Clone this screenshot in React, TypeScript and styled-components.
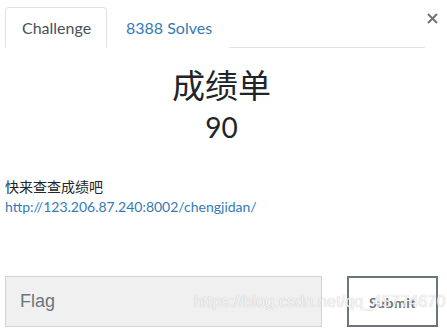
import React from "react";
import styled, { createGlobalStyle } from "styled-components";

const Global = createGlobalStyle`
  html, body { margin: 0; padding: 0; background: #fff; }
  body { font-family: Lato, "Noto Sans CJK SC", sans-serif; color: #212529; }
`;

const Modal = styled.div`
  position: relative;
  width: 447px;
  height: 331px;
  padding: 7px 9px 0 5px;
  box-sizing: border-box;
  display: flex;
  flex-direction: column;
  overflow: hidden;
`;

const Header = styled.div`
  display: flex;
  align-items: flex-start;
`;

const Tabs = styled.div`
  flex: 0 0 420px;
  display: flex;
  border-bottom: 1px solid #dee2e6;
  height: 41px;
  box-sizing: border-box;
`;

const Tab = styled.div<{ $active?: boolean }>`
  height: 41px;
  box-sizing: border-box;
  padding: 0 16px;
  display: flex;
  align-items: center;
  font-size: 16px;
  color: ${(p) => (p.$active ? "#495057" : "#337ab7")};
  border: 1px solid ${(p) => (p.$active ? "#dee2e6" : "transparent")};
  border-bottom-color: ${(p) => (p.$active ? "#fff" : "transparent")};
  border-radius: 4px 4px 0 0;
  background: #fff;
  margin-bottom: -1px;
  ${(p) => (p.$active ? "width: 102px;" : "padding-left: 18px;")}
`;

const Close = styled.div`
  margin-left: 2px;
  margin-top: 4px;
  width: 14px;
  height: 14px;
  display: flex;
  align-items: center;
  justify-content: center;
`;

const Body = styled.div`
  display: flex;
  flex-direction: column;
  align-items: center;
`;

const Title = styled.h2`
  margin: 17px 0 0;
  font-weight: 400;
  font-size: 33px;
  line-height: 38px;
  font-family: "Noto Sans CJK SC", sans-serif;
  color: #212529;
`;

const Score = styled.h3`
  margin: 7px 0 0;
  font-weight: 400;
  font-size: 28px;
  line-height: 34px;
  color: #212529;
`;

const Description = styled.div`
  margin-top: 32px;
  font-size: 14px;
  line-height: 20px;
  color: #212529;
  font-family: "Noto Sans CJK SC", sans-serif;
`;

const Link = styled.a`
  display: block;
  margin-top: 1px;
  font-family: Lato, sans-serif;
  font-size: 14px;
  line-height: 20px;
  color: #337ab7;
  text-decoration: none;
`;

const Form = styled.div`
  margin-top: 59px;
  display: flex;
  gap: 25px;
`;

const FlagInput = styled.div`
  width: 317px;
  height: 51px;
  box-sizing: border-box;
  background: #f0f0f0;
  border: 1px solid #ced4da;
  display: flex;
  align-items: center;
  padding-left: 14px;
  font-family: "Liberation Sans", Arial, sans-serif;
  font-size: 18px;
  color: #6c757d;
`;

const SubmitButton = styled.div`
  width: 91px;
  height: 51px;
  box-sizing: border-box;
  border: 2px solid #6c757d;
  display: flex;
  align-items: center;
  justify-content: center;
  font-weight: 700;
  font-size: 14px;
  color: #6c757d;
  letter-spacing: 0.5px;
  padding-top: 2px;
`;

const Watermark = styled.div`
  position: absolute;
  left: 194px;
  top: 292px;
  font-family: "Liberation Sans", Arial, sans-serif;
  font-size: 16.4px;
  white-space: nowrap;
  color: rgba(255, 255, 255, 0.85);
  text-shadow: 0 0 1px rgba(120, 120, 120, 0.55);
  pointer-events: none;
`;

export default function App() {
  return (
    <>
      <Global />
      <Modal>
        <Header>
          <Tabs>
            <Tab $active>Challenge</Tab>
            <Tab>8388 Solves</Tab>
          </Tabs>
          <Close>
            <svg width="11" height="11" viewBox="0 0 11 11">
              <path d="M1 1L10 10M10 1L1 10" stroke="#6c757d" strokeWidth="2" />
            </svg>
          </Close>
        </Header>
        <Body>
          <Title>成绩单</Title>
          <Score>90</Score>
        </Body>
        <Description>
          快来查查成绩吧
          <Link href="#">http://123.206.87.240:8002/chengjidan/</Link>
        </Description>
        <Form>
          <FlagInput>Flag</FlagInput>
          <SubmitButton>Submit</SubmitButton>
        </Form>
        <Watermark>https://blog.csdn.net/qq_45774670</Watermark>
      </Modal>
    </>
  );
}
